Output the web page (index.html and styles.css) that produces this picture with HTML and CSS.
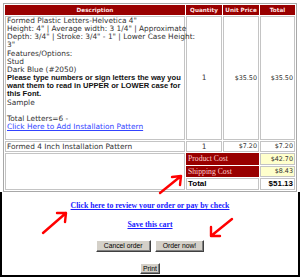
FILE: index.html
```html
<!DOCTYPE html>
<html lang="en">
<head>
    <meta charset="UTF-8">
    <title>Shopping Cart</title>
    <link rel="stylesheet" href="styles.css">
</head>
<body>

    <div class="page">
        <!-- Cart table -->
        <table class="cart">
            <tr>
                <th class="col-desc">Description</th>
                <th class="col-qty">Quantity</th>
                <th class="col-price">Unit Price</th>
                <th class="col-total">Total</th>
            </tr>
            <tr class="item">
                <td class="desc">
                    Formed Plastic Letters-Helvetica 4"<br>
                    Height: 4" | Average width: 3 1/4" | Approximate<br>
                    Depth: 3/4" | Stroke: 3/4" - 1" | Lower Case Height:<br>
                    3"<br>
                    Features/Options:<br>
                    Stud<br>
                    Dark Blue (#2050)
                    <b class="note">Please type numbers or sign letters the way you<br>
                    want them to read in UPPER or LOWER case for<br>
                    this Font.</b>
                    Sample<br>
                    <br>
                    Total Letters=6 -<br>
                    <a href="#">Click Here to Add Installation Pattern</a><br>
                    &nbsp;
                </td>
                <td class="qty">1</td>
                <td class="price">$35.50</td>
                <td class="price">$35.50</td>
            </tr>
            <tr class="item small">
                <td class="desc">Formed 4 Inch Installation Pattern</td>
                <td class="qty">1</td>
                <td class="price">$7.20</td>
                <td class="price">$7.20</td>
            </tr>
            <tr class="sum product">
                <td class="blank" rowspan="3"></td>
                <td class="label" colspan="2">Product Cost</td>
                <td class="amount">$42.70</td>
            </tr>
            <tr class="sum shipping">
                <td class="label" colspan="2">Shipping Cost</td>
                <td class="amount">$8.43</td>
            </tr>
            <tr class="sum grand">
                <td class="grand-label" colspan="2">Total</td>
                <td class="grand-amount">$51.13</td>
            </tr>
        </table>

        <!-- Links and buttons -->
        <div class="actions">
            <p class="link-line"><a href="#">Click here to review your order or pay by check</a></p>
            <p class="link-line"><a href="#">Save this cart</a></p>
            <div class="button-row">
                <button>Cancel order</button>
                <button>Order now!</button>
            </div>
            <div class="button-row">
                <button class="print">Print</button>
            </div>
        </div>

        <!-- Red arrows drawn over the screenshot -->
        <svg class="arrows" width="300" height="278" viewBox="0 0 300 278">
            <g fill="none" stroke="#f00" stroke-width="2.4" stroke-linecap="round" stroke-linejoin="round">
                <path d="M160 193 L181 176 M172 177 L181 176 L180 185"/>
                <path d="M43 233 L66 213 M57 213 L66 213 L65 222"/>
                <path d="M232 219 L211 236 M211 227 L211 236 L220 236"/>
            </g>
        </svg>
    </div>

</body>
</html>
```

FILE: styles.css
```css
body {
    margin: 0;
    padding: 0;
    background-color: #fff;
    font-family: Verdana, "DejaVu Sans", sans-serif;
}

.page {
    position: relative;
    width: 300px;
    height: 278px;
    overflow: hidden;
}

/* Tabel keranjang */
.cart {
    width: 294px;
    margin: 3px 0 0 3px;
    table-layout: fixed;
    border-collapse: separate;
    border-spacing: 1px;
    border: 1px solid #a8a8a8;
    font-size: 7.4px;
    color: #333;
}

.cart th,
.cart td {
    box-sizing: border-box;
    padding: 0 1px;
}

.cart th {
    background-color: #990000;
    border: 1px solid #990000;
    color: #ffe4e4;
    font-size: 5.7px;
    font-weight: bold;
    line-height: 8px;
    text-align: center;
    white-space: nowrap;
}

.col-desc { width: 180px; }
.col-qty { width: 36px; }
.col-price { width: 36px; }
.col-total { width: 35px; }

.cart td {
    border: 1px solid #c4c4c4;
    vertical-align: middle;
}

.item td {
    line-height: 8.15px;
}

.item .desc {
    white-space: nowrap;
    vertical-align: top;
}

.item.small td {
    line-height: 9px;
}

.note {
    display: block;
    font-family: "Liberation Sans", Arial, sans-serif;
    font-size: 7.6px;
    line-height: 8.15px;
    color: #111;
}

.desc a {
    color: #3344ff;
}

.qty {
    text-align: center;
}

.price {
    font-size: 6.4px;
    text-align: right;
}

/* Baris ringkasan */
.product td {
    line-height: 10px;
}

.shipping td {
    line-height: 9px;
}

.sum .label {
    background-color: #990000;
    border-color: #990000;
    color: #ffcccc;
    font-family: "Liberation Serif", "Times New Roman", serif;
    font-size: 7.7px;
}

.sum .amount {
    background-color: #ffffcc;
    font-size: 6.4px;
    text-align: right;
}

.grand td {
    line-height: 10px;
}

.grand-label,
.grand-amount {
    font-family: "Liberation Sans", Arial, sans-serif;
    font-size: 8px;
    font-weight: bold;
    color: #000;
}

.grand-amount {
    text-align: right;
}

/* Tautan dan tombol */
.actions {
    box-sizing: border-box;
    height: 85px;
    overflow: hidden;
    border-left: 2px solid #000;
    border-right: 2px solid #000;
    border-bottom: 2px solid #000;
    text-align: center;
    font-family: "Liberation Serif", "Times New Roman", serif;
}

.link-line {
    margin: 9px 0 0;
    font-size: 7.8px;
    font-weight: bold;
    line-height: 10px;
}

.link-line a {
    color: #1a1aff;
}

.button-row {
    display: flex;
    justify-content: center;
    gap: 4px;
    margin-top: 10px;
}

.button-row + .button-row {
    margin-top: 11px;
}

.button-row button {
    height: 12px;
    padding: 0 7px;
    font-family: "Liberation Sans", Arial, sans-serif;
    font-size: 6.8px;
    line-height: 10px;
    color: #000;
    background-color: #d4d0c8;
    border: 1px solid;
    border-color: #fff #404040 #404040 #fff;
    box-shadow: inset -1px -1px #808080;
}

.button-row .print {
    height: 11px;
    padding: 0 2px;
    line-height: 9px;
}

.arrows {
    position: absolute;
    left: 0;
    top: 0;
}
```
